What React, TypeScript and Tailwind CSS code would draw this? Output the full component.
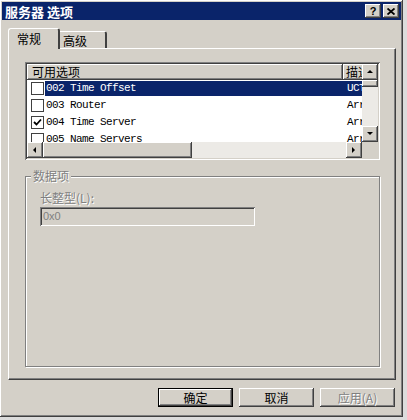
import React from "react";

// classic 3D bevels
const raised =
  "shadow-[inset_-1px_-1px_0_#404040,inset_1px_1px_0_#ffffff,inset_-2px_-2px_0_#808080,inset_2px_2px_0_#d4d0c8]";
const sunken =
  "shadow-[inset_1px_1px_0_#808080,inset_-1px_-1px_0_#ffffff,inset_2px_2px_0_#404040,inset_-2px_-2px_0_#d4d0c8]";
const headerCell =
  "shadow-[inset_-1px_-1px_0_#404040,inset_1px_1px_0_#ffffff,inset_-2px_-2px_0_#808080]";

const cjk = "font-['Noto_Sans_CJK_SC',sans-serif]";
const mono = "font-['Liberation_Mono','Noto_Sans_CJK_SC',monospace]";

const options = [
  { code: "002 Time Offset", desc: "UCT", checked: false, selected: true },
  { code: "003 Router", desc: "Arr", checked: false, selected: false },
  { code: "004 Time Server", desc: "Arr", checked: true, selected: false },
  { code: "005 Name Servers", desc: "Arr", checked: false, selected: false },
];

const Arrow = ({ dir }: { dir: "up" | "down" | "left" | "right" }) => {
  const pts = {
    up: "1,5 4,2 7,5",
    down: "1,2 4,5 7,2",
    left: "5,1 2,4 5,7",
    right: "2,1 5,4 2,7",
  }[dir];
  return (
    <svg width="8" height="8" viewBox="0 0 8 8">
      <polygon points={pts} fill="#000" />
    </svg>
  );
};

const ScrollBtn = ({ dir }: { dir: "up" | "down" | "left" | "right" }) => (
  <div className={`w-[16px] h-[16px] shrink-0 bg-[#d4d0c8] flex items-center justify-center ${raised}`}>
    <Arrow dir={dir} />
  </div>
);

const Checkbox = ({ checked }: { checked: boolean }) => (
  <div className="w-[13px] h-[13px] bg-white border border-[#404040] flex items-center justify-center">
    {checked && (
      <svg width="9" height="9" viewBox="0 0 9 9">
        <path d="M1 4 L3.5 6.5 L8 1.5" stroke="#000" strokeWidth="1.8" fill="none" />
      </svg>
    )}
  </div>
);

const DlgButton = ({
  label,
  isDefault,
  disabled,
}: {
  label: React.ReactNode;
  isDefault?: boolean;
  disabled?: boolean;
}) => (
  <div
    className={`w-[75px] h-[19px] ${isDefault ? "border border-black" : ""} bg-[#d4d0c8] flex items-center justify-center text-[12px] ${raised} ${
      disabled ? "text-[#808080] [text-shadow:1px_1px_0_#ffffff]" : "text-black"
    }`}
  >
    {label}
  </div>
);

const App = () => {
  return (
    <div className={`w-[407px] h-[420px] bg-[#dcdcdc] overflow-hidden ${cjk}`}>
      <div className={`w-[403px] h-[417px] bg-[#d4d0c8] p-[2px] flex flex-col ${raised}`}>
        {/* title bar */}
        <div className="h-[18px] bg-[#0a246a] flex items-center justify-between pl-[3px] pr-[2px]">
          <span className="text-white font-bold text-[13px] leading-none">服务器 选项</span>
          <div className="flex gap-[2px]">
            <div className={`w-[16px] h-[14px] bg-[#d4d0c8] flex items-center justify-center ${raised}`}>
              <span className="font-['Liberation_Sans',sans-serif] font-bold text-[11px] leading-none text-black">?</span>
            </div>
            <div className={`w-[16px] h-[14px] bg-[#d4d0c8] flex items-center justify-center ${raised}`}>
              <svg width="8" height="7" viewBox="0 0 8 7">
                <path d="M0.5 0.5 L7.5 6.5 M7.5 0.5 L0.5 6.5" stroke="#000" strokeWidth="1.8" />
              </svg>
            </div>
          </div>
        </div>

        {/* tabs */}
        <div className="flex items-end h-[20px] mt-[8px] pl-[6px] relative z-10">
          <div className="w-[52px] h-[21px] -mb-[1px] bg-[#d4d0c8] border-t border-l border-white border-r-2 border-r-[#404040] rounded-t-[3px] flex items-start pl-[8px] pt-[1px] text-[12px] text-black">
            常规
          </div>
          <div className="w-[47px] h-[17px] bg-[#d4d0c8] border-t border-white border-r-2 border-r-[#404040] rounded-tr-[3px] flex items-start pl-[3px] text-[12px] text-black">
            高级
          </div>
        </div>

        {/* panel */}
        <div className="ml-[6px] w-[388px] h-[332px] border-t border-l border-white border-r border-b border-r-[#404040] border-b-[#404040] shadow-[inset_-1px_-1px_0_#808080] pl-[16px] pt-[13px]">
          {/* list view */}
          <div className={`w-[355px] h-[98px] p-[2px] bg-white ${sunken} flex flex-col`}>
            <div className="flex flex-1 min-h-0">
              <div className="flex-1 overflow-hidden">
                <div className="flex h-[16px] text-[12px] leading-none">
                  <div className={`w-[316px] shrink-0 bg-[#d4d0c8] pl-[5px] flex items-center ${headerCell}`}>可用选项</div>
                  <div className={`w-[40px] shrink-0 bg-[#d4d0c8] pl-[3px] flex items-center ${headerCell}`}>描述</div>
                </div>
                {options.map((o) => (
                  <div key={o.code} className="flex items-center h-[17px]">
                    <div className="w-[18px] shrink-0 flex justify-start pl-[4px]">
                      <Checkbox checked={o.checked} />
                    </div>
                    <div
                      className={`flex-1 flex items-center h-[15px] text-[11px] tracking-[-0.6px] ${mono} ${
                        o.selected ? "bg-[#0a246a] text-white" : "text-black"
                      }`}
                    >
                      <span className="w-[302px] shrink-0 pl-[1px] whitespace-nowrap">{o.code}</span>
                      <span className="whitespace-nowrap">{o.desc}</span>
                    </div>
                  </div>
                ))}
              </div>
              {/* vertical scrollbar */}
              <div className="w-[16px] flex flex-col bg-[#eceae6]">
                <ScrollBtn dir="up" />
                <div className={`h-[7px] bg-[#d4d0c8] ${raised}`} />
                <div className="flex-1" />
                <ScrollBtn dir="down" />
              </div>
            </div>
            {/* horizontal scrollbar */}
            <div className="flex h-[16px]">
              <ScrollBtn dir="left" />
              <div className={`w-[149px] bg-[#d4d0c8] ${raised}`} />
              <div className="flex-1 bg-[#eceae6]" />
              <ScrollBtn dir="right" />
              <div className="w-[16px] bg-[#d4d0c8]" />
            </div>
          </div>

          {/* group box */}
          <div className="relative mt-[16px] w-[355px] h-[191px] border border-[#808080] shadow-[1px_1px_0_#ffffff,inset_1px_1px_0_#ffffff] pl-[14px] pt-[13px]">
            <span className="absolute -top-[9px] left-[5px] bg-[#d4d0c8] px-[2px] text-[12px] leading-[16px] text-[#808080] [text-shadow:1px_1px_0_#ffffff]">
              数据项
            </span>
            <div className="text-[12px] leading-[16px] text-[#808080] [text-shadow:1px_1px_0_#ffffff]">长整型(L):</div>
            <div className={`mt-[1px] w-[215px] h-[19px] bg-[#d4d0c8] ${sunken} flex items-center pl-[3px]`}>
              <span className="font-['Liberation_Sans',sans-serif] text-[11px] text-[#808080]">0x0</span>
            </div>
          </div>
        </div>

        {/* dialog buttons */}
        <div className="flex justify-end gap-[6px] mt-[8px] pr-[6px]">
          <DlgButton label="确定" isDefault />
          <DlgButton label="取消" />
          <DlgButton label="应用(A)" disabled />
        </div>
      </div>
    </div>
  );
};

export default App;
